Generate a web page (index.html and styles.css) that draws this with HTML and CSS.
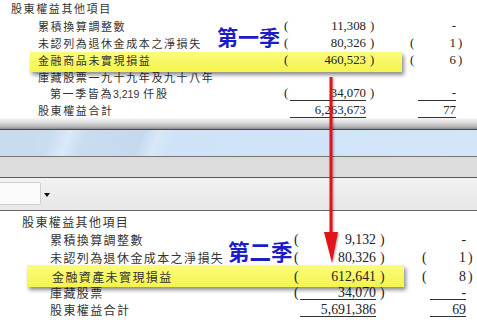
FILE: index.html
```html
<!DOCTYPE html>
<html lang="zh-Hant">
<head>
<meta charset="utf-8">
<title>股東權益</title>
<link rel="stylesheet" href="styles.css">
</head>
<body>
<div class="page">
  <section class="doc doc-top">
    <div class="row head"><span class="lbl i0">股東權益其他項目</span></div>
    <div class="row"><span class="lbl i1">累積換算調整數</span><span class="num po">(</span><span class="num n1">11,308</span><span class="num pc">)</span><span class="num po2"></span><span class="num n2">-</span><span class="num pc2"></span></div>
    <div class="row"><span class="lbl i1">未認列為退休金成本之淨損失</span><span class="num po">(</span><span class="num n1">80,326</span><span class="num pc">)</span><span class="num po2">(</span><span class="num n2">1</span><span class="num pc2">)</span></div>
    <div class="row hl"><span class="lbl i1">金融商品未實現損益</span><span class="num po">(</span><span class="num n1">460,523</span><span class="num pc">)</span><span class="num po2">(</span><span class="num n2">6</span><span class="num pc2">)</span></div>
    <div class="row"><span class="lbl i1">庫藏股票一九十九年及九十八年</span></div>
    <div class="row"><span class="lbl i2">第一季皆為<span class="lat">3,219</span> 仟股</span><span class="num po">(</span><span class="num n1 ul">34,070</span><span class="num pc">)</span><span class="num po2"></span><span class="num n2 ul">-</span><span class="num pc2"></span></div>
    <div class="row"><span class="lbl i1">股東權益合計</span><span class="num po"></span><span class="num n1 ul">6,263,673</span><span class="num pc"></span><span class="num po2"></span><span class="num n2 ul">77</span><span class="num pc2"></span></div>
  </section>

  <div class="chrome">
    <div class="shade"></div>
    <div class="bar-blue"></div>
    <div class="bar-gray"></div>
    <div class="toolbar"><div class="combo"></div><span class="drop"></span></div>
  </div>

  <section class="doc doc-bottom">
    <div class="row head"><span class="lbl i0">股東權益其他項目</span></div>
    <div class="row"><span class="lbl i1">累積換算調整數</span><span class="num po">(</span><span class="num n1">9,132</span><span class="num pc">)</span><span class="num po2"></span><span class="num n2">-</span><span class="num pc2"></span></div>
    <div class="row"><span class="lbl i1">未認列為退休金成本之淨損失</span><span class="num po">(</span><span class="num n1">80,326</span><span class="num pc">)</span><span class="num po2">(</span><span class="num n2">1</span><span class="num pc2">)</span></div>
    <div class="row hl"><span class="lbl i1h">金融資產未實現損益</span><span class="num po">(</span><span class="num n1">612,641</span><span class="num pc">)</span><span class="num po2">(</span><span class="num n2">8</span><span class="num pc2">)</span></div>
    <div class="row"><span class="lbl i1">庫藏股票</span><span class="num po">(</span><span class="num n1 ul">34,070</span><span class="num pc">)</span><span class="num po2"></span><span class="num n2 ul">-</span><span class="num pc2"></span></div>
    <div class="row"><span class="lbl i1">股東權益合計</span><span class="num po"></span><span class="num n1 ul">5,691,386</span><span class="num pc"></span><span class="num po2"></span><span class="num n2 ul">69</span><span class="num pc2"></span></div>
  </section>

  <div class="tag tag1">第一季</div>
  <div class="tag tag2">第二季</div>

  <svg class="arrow" width="20" height="192" viewBox="0 0 20 192" aria-hidden="true">
    <line x1="9" y1="3" x2="9" y2="162" stroke="#e0141a" stroke-width="3"/>
    <polygon points="2,158 16,158 10,189" fill="#e0141a"/>
  </svg>
</div>
</body>
</html>
```

FILE: styles.css
```css
* { box-sizing: border-box; margin: 0; padding: 0; }
html, body { width: 477px; height: 330px; overflow: hidden; background: #fff; }
body { font-family: "Noto Sans CJK TC", "Noto Sans CJK SC", sans-serif; color: #333; }

.page { position: relative; width: 477px; height: 330px; overflow: hidden; }

.doc { background: #fff; }
.doc-top { height: 118px; overflow: hidden; }
.doc-bottom { height: 119px; padding-top: 2.7px; overflow: hidden; }

.row { display: grid; align-items: center; }
.doc-top .row {
  grid-template-columns: 284px 6px 76px 44px 8px 38px 1fr;
  height: 16.8px;
  font-size: 11px;
}
.doc-top .row.head { height: 17px; margin-bottom: 1.6px; }
.doc-bottom .row {
  grid-template-columns: 294px 6px 76px 46px 8px 36px 1fr;
  height: 17.6px;
  font-size: 12px;
}

.lbl { white-space: nowrap; line-height: 1; letter-spacing: 1.6px; }
.doc-bottom .lbl { letter-spacing: 1.4px; }
.doc-top .i0 { padding-left: 11px; }
.doc-top .i1 { padding-left: 38px; }
.doc-top .i2 { padding-left: 50px; }
.doc-bottom .i0 { padding-left: 22px; }
.doc-bottom .i1 { padding-left: 50px; }
.doc-bottom .i1h { padding-left: 52px; }

.lat { font-family: "Liberation Sans", sans-serif; font-size: 10.5px; letter-spacing: 0; }

.num {
  font-family: "Liberation Serif", serif;
  font-size: 12.8px;
  line-height: 13px;
  height: 14px;
  color: #222;
  white-space: nowrap;
}
.doc-bottom .num { font-size: 13.8px; }
.n1, .n2 { text-align: right; }
.pc { padding-left: 4px; }
.pc2 { padding-left: 2px; }
.ul { border-bottom: 1px solid #333; }

.row.hl { position: relative; z-index: 2; }
.row.hl::before {
  content: "";
  position: absolute;
  z-index: -1;
  background: linear-gradient(#fcfc7c, #f4f44e);
  box-shadow: 2px 3px 4px rgba(0, 0, 0, 0.45);
}
.doc-top .row.hl::before { left: 30px; top: -0.2px; width: 372px; height: 20px; }
.doc-bottom .row.hl { padding-top: 3px; }
.doc-bottom .row.hl::before { left: 27px; top: -1.5px; width: 377px; height: 22px; }

/* window chrome between the two captures */
.chrome { height: 93px; }
.shade { height: 11px; background: linear-gradient(#f6f6f6, #e2e2e2 35%, #b4b4b4 80%, #8c8c8c); }
.bar-blue {
  height: 28px;
  border-top: 1px solid #4a4a4a;
  border-bottom: 1px solid #767676;
  background: linear-gradient(110deg, #c7dbef 0, #c9ddf1 50px, #dbe9f9 66px, #c9ddf1 82px, #c4d9ee 135px, #d9e8f9 150px, #cfe3f8 165px, #d2e5f9 100%);
}
.bar-gray { height: 21px; background: #dcdcdc; border-bottom: 1px solid #5a5a5a; }
.toolbar {
  height: 33px;
  display: flex;
  align-items: flex-start;
  padding-top: 4px;
  background: linear-gradient(#f2f2f2, #e7e7e7);
  border-bottom: 1px solid #6a6a6a;
}
.combo {
  width: 43px;
  height: 23px;
  margin-left: -2px;
  background: #fafafa;
  border: 1px solid #cfcfcf;
  border-radius: 2px;
}
.drop {
  width: 0;
  height: 0;
  margin: 11px 0 0 3px;
  border-left: 3px solid transparent;
  border-right: 3px solid transparent;
  border-top: 4px solid #111;
}

.tag {
  position: absolute;
  font-family: "Noto Sans CJK TC", sans-serif;
  font-weight: 700;
  color: #1c1cc8;
  line-height: 1;
  white-space: nowrap;
}
.tag1 { left: 217px; top: 26px; font-size: 21px; }
.tag2 { left: 228px; top: 240px; font-size: 21.5px; }

.arrow {
  position: absolute;
  left: 322px;
  top: 74px;
  z-index: 5;
  filter: drop-shadow(1px 1px 1px rgba(0, 0, 0, 0.35));
}
```
